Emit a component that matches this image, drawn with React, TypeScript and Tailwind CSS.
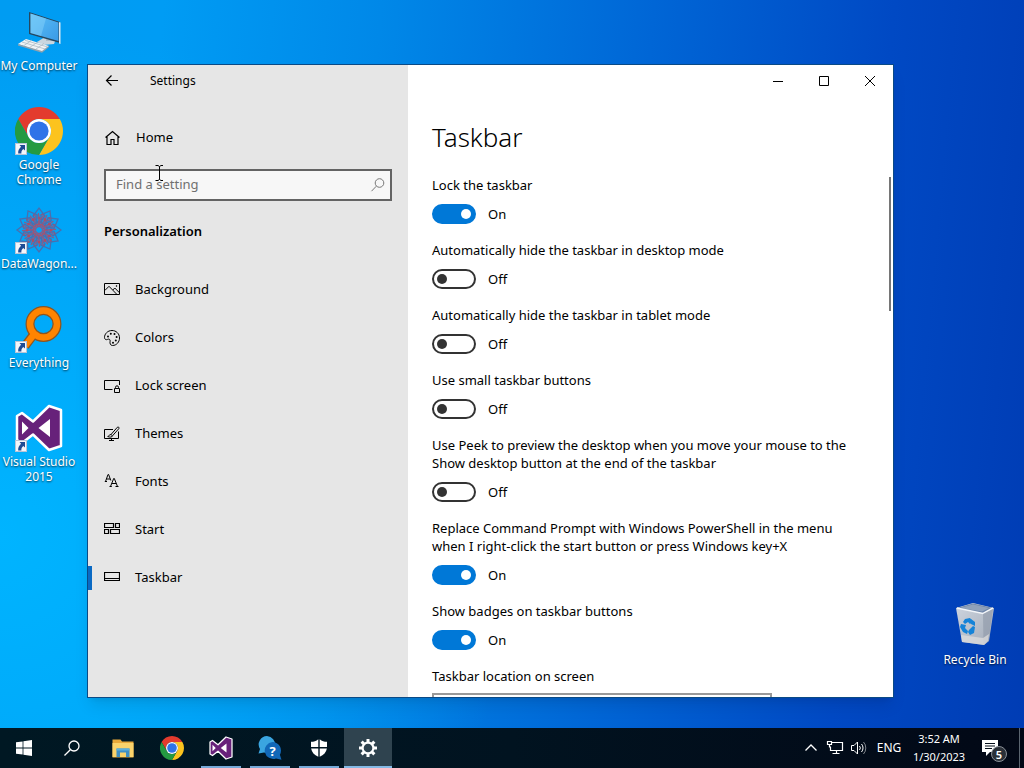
import { useState, type ReactNode } from "react";

function ShortcutArrow() {
  return (
    <svg viewBox="0 0 12 12" className="absolute bottom-0 left-0 size-3" aria-hidden="true">
      <rect x="0.5" y="0.5" width="11" height="11" fill="#f4f6fa" stroke="#b9c4d6" />
      <path d="M4.500 2h5.500v5.500L8.300 5.900C6.800 7 6.200 8.400 6.400 10.400H3.200C2.900 7.800 4 5.600 6.100 3.700Z" fill="#1f4c94" />
    </svg>
  );
}

function ComputerIcon() {
  return (
    <svg viewBox="0 0 48 48" className="size-12" aria-hidden="true">
      <defs>
        <linearGradient id="screen" x1="0" y1="0" x2="1" y2="1">
          <stop offset="0" stopColor="#5cc0f8" />
          <stop offset="1" stopColor="#3a9ae6" />
        </linearGradient>
      </defs>
      <path d="M22 34 30 29l11 2-2 5-11 1Z" fill="#c9d6df" />
      <path d="M31 27h7v6h-7Z" fill="#aebdc8" />
      <path d="M14 4 45 14v21L14 26Z" fill="#26475f" />
      <path d="M15.500 5.600 43.500 14.600v18.400l-28-8.100Z" fill="url(#screen)" />
      <path d="M15.500 5.600 31 10.600 26 28l-10.500-3.100Z" fill="#8bd4fb" opacity=".45" />
      <path d="m44 14 1.500.5V36l-1.500-.5Z" fill="#dbe9f2" />
      <path d="m3 36 8-5 23 7-7 6Z" fill="#f0f3f5" />
      <path d="m3 36 24 7 7-5.500v1.600L27 44.800 3 37.400Z" fill="#90a2ae" />
      <path d="m7 34 23 7M10 32.300l22 6.500M9 37.500l8-5.500M15 39.300l8-5.500M21 41l8-5.500" stroke="#a5b4be" strokeWidth=".7" />
    </svg>
  );
}

function ChromeIcon({ className }: { className: string }) {
  return (
    <svg viewBox="0 0 48 48" className={className} aria-hidden="true">
      <path d="M24 12H44.780A24 24 0 0 0 3.215 12L13.608 30A12 12 0 0 1 24 12Z" fill="#e33b2e" />
      <path d="M44.780 12A24 24 0 0 1 24 48L34.392 30A12 12 0 0 0 24 12Z" fill="#fcc31e" />
      <path d="M34.392 30 24 48A24 24 0 0 1 3.215 12L13.608 30A12 12 0 0 0 34.392 30Z" fill="#249a41" />
      <circle cx="24" cy="24" r="12" fill="#fff" />
      <circle cx="24" cy="24" r="9.600" fill="#2f73e8" />
    </svg>
  );
}

const petalAngles = [0, 30, 60, 90, 120, 150, 180, 210, 240, 270, 300, 330];

function DataWagonIcon() {
  return (
    <svg viewBox="0 0 48 48" className="size-12" fill="none" aria-hidden="true">
      {petalAngles.map((angle) => (
        <g key={angle} transform={`rotate(${angle} 24 24)`}>
          <path d="M24 18 18 10l6-8 6 8Z" stroke="#4a6fae" strokeWidth="1.300" />
          <path d="M24 21c-5-4-5-7-3-12M24 21c4-4 6-6 8-12" stroke="#8d5b84" strokeWidth="1.200" />
          <circle cx="24" cy="12" r="1.500" fill="#b04a63" />
          <circle cx="19" cy="9" r="1" fill="#8a5a80" />
        </g>
      ))}
      <circle cx="24" cy="24" r="6" stroke="#a05574" strokeWidth="1.500" />
    </svg>
  );
}

function EverythingIcon() {
  return (
    <svg viewBox="0 0 48 48" className="size-12" fill="none" aria-hidden="true">
      <path d="M19 29 10 41" stroke="#8b5522" strokeWidth="9" />
      <circle cx="28.500" cy="19" r="13.500" stroke="#8b5522" strokeWidth="9" />
      <path d="M20 28 10 41" stroke="#ff8400" strokeWidth="6.500" />
      <circle cx="28.500" cy="19" r="13.500" stroke="#ff8400" strokeWidth="6.500" />
    </svg>
  );
}

function VisualStudioIcon({ className }: { className: string }) {
  return (
    <svg viewBox="0 0 48 48" className={className} aria-hidden="true">
      <path
        d="M34 2 46 6v36l-12 4-16-15.500L7 39l-5-3V12l5-3 11 8.500Z"
        fill="#67217a"
        stroke="#fff"
        strokeWidth="2.500"
        strokeLinejoin="round"
      />
      <path d="M35 15v18L23.500 24ZM7 17.500v13l6.500-6.500Z" fill="#fff" />
    </svg>
  );
}

function RecycleBinIcon() {
  return (
    <svg viewBox="0 3 48 48" className="size-12" aria-hidden="true">
      <defs>
        <linearGradient id="bin" x1="0" y1="0" x2="1" y2="1">
          <stop offset="0" stopColor="#cfd6e0" />
          <stop offset="1" stopColor="#a3abb8" />
        </linearGradient>
      </defs>
      <path d="M5 9 22 4l21 5-5 33-5 4-22-3Z" fill="url(#bin)" />
      <path d="M6 9 22 4.500 42 9l-10 5.500Z" fill="#6f86a8" />
      <path d="m9 9 13-3.500L38 9l-7 3.500Z" fill="#8fa1ba" />
      <path d="M6 9 32 14.500 42 9" stroke="#f3f6fa" strokeWidth="1.500" fill="none" />
      <path d="m32 15 10-5-4.500 32-5 4Z" fill="#939dac" opacity=".7" />
      <path d="m10 36 22 3 6-4-1 7-4 4-22-3Z" fill="#dedede" opacity=".75" />
      <g fill="#1483d8">
        <path d="m14 20 5-1 3 4-3 2-2-2-3 2-2-2Z" />
        <path d="m10 25 5 1-1 3 3 3-1 3-4-2-3-5Z" />
        <path d="m18 31 4-4 2 1-1 6-4 2-2-3Z" />
        <path d="m20 20 4 3v4l-4-2Z" />
      </g>
    </svg>
  );
}

function DesktopIcon({ label, shortcut, children }: { label: string; shortcut?: boolean; children: ReactNode }) {
  return (
    <button
      type="button"
      className="flex h-[99px] w-[78px] flex-col items-center gap-0.5 pt-2 text-center text-xs leading-[15px] text-white [text-shadow:0_1px_2px_rgba(0,0,0,0.7)]"
    >
      <span className="relative shrink-0">
        {children}
        {shortcut && <ShortcutArrow />}
      </span>
      <span>{label}</span>
    </button>
  );
}

function LineIcon({ children }: { children: ReactNode }) {
  return (
    <svg viewBox="0 0 16 16" className="size-4 shrink-0" fill="none" stroke="currentColor" aria-hidden="true">
      {children}
    </svg>
  );
}

const navItems: { label: string; icon: ReactNode }[] = [
  {
    label: "Background",
    icon: (
      <LineIcon>
        <path d="M.5 1.500h15v11H.5ZM.8 8.500 5 4.300l7.500 7.700M8.800 8l2-2 4.700 4.800" />
        <circle cx="12.500" cy="4" r=".4" />
      </LineIcon>
    ),
  },
  {
    label: "Colors",
    icon: (
      <LineIcon>
        <path d="M8 .5C3.500.5.500 4 .5 7.500c0 2 1.800 2.600 3 1.900 1.500-.8 3 .1 2.600 1.800-.5 2.200.3 4.300 2.400 4.300 4 0 7-3.500 7-7.500 0-4.500-3.500-7.500-7.500-7.500Z" />
        <g fill="currentColor" stroke="none">
          <circle cx="4" cy="6.500" r="1" />
          <circle cx="6.800" cy="3.800" r="1" />
          <circle cx="10.500" cy="4" r="1" />
          <circle cx="12.600" cy="7" r="1" />
          <circle cx="11.800" cy="10.500" r="1" />
          <circle cx="9" cy="12.700" r="1" />
        </g>
      </LineIcon>
    ),
  },
  {
    label: "Lock screen",
    icon: (
      <LineIcon>
        <path d="M8.500 11.500h-8v-9h15v4.500" />
        <path d="M10.500 10.500h5v4h-5ZM11.500 10.500v-1.200a1.500 1.500 0 0 1 3 0v1.200" />
      </LineIcon>
    ),
  },
  {
    label: "Themes",
    icon: (
      <LineIcon>
        <path d="M9 3.500H.5v9h14V5.500M5 14.500h5M7.500 12.500v2" />
        <path d="M7 8.500 13.300 1.300a1 1 0 0 1 1.500 1.400L8.500 9.800M7 8.500c-1.500 0-2 1.500-3.300 2 2 1 4.600.7 4.800-.7Z" />
      </LineIcon>
    ),
  },
  {
    label: "Fonts",
    icon: (
      <LineIcon>
        <path d="M1.500 7.500 4 .5h.6l2.200 6M2.400 5h3.800M.8 7.500H3" />
        <path d="m6.500 12.500 3.200-8h.6l3.200 8M7.700 9.500h4.600M5.500 12.500h2.300M11.500 12.500h3" />
      </LineIcon>
    ),
  },
  {
    label: "Start",
    icon: (
      <LineIcon>
        <path d="M.5 1.500h9v4h-9ZM11.500 1.500h4v4h-4ZM.5 7.500h4v4h-4ZM6.500 7.500h9v4h-9Z" strokeWidth="1.200" />
      </LineIcon>
    ),
  },
  {
    label: "Taskbar",
    icon: (
      <LineIcon>
        <path d="M.5 2.500h15v8H.5ZM.5 8.500h15" strokeWidth="1.200" />
      </LineIcon>
    ),
  },
];

const initialSettings = [
  { label: "Lock the taskbar", on: true },
  { label: "Automatically hide the taskbar in desktop mode", on: false },
  { label: "Automatically hide the taskbar in tablet mode", on: false },
  { label: "Use small taskbar buttons", on: false },
  {
    label: "Use Peek to preview the desktop when you move your mouse to the Show desktop button at the end of the taskbar",
    on: false,
  },
  {
    label: "Replace Command Prompt with Windows PowerShell in the menu when I right-click the start button or press Windows key+X",
    on: true,
  },
  { label: "Show badges on taskbar buttons", on: true },
];

function Sidebar() {
  return (
    <aside className="flex w-80 shrink-0 flex-col bg-[#e6e6e6]">
      <header className="flex h-8 items-center">
        <button type="button" aria-label="Back" className="flex h-8 w-12 items-center justify-center">
          <svg viewBox="0 0 16 16" className="size-4" fill="none" stroke="currentColor" aria-hidden="true">
            <path d="M14 7.500H2.500M7.500 2.500l-5 5 5 5" strokeWidth="1.200" />
          </svg>
        </button>
        <h1 className="ml-3.5 text-xs">Settings</h1>
      </header>
      <a href="#home" className="mt-[17px] flex h-12 items-center gap-4 px-4">
        <LineIcon>
          <path d="m1.500 7.500 7-6 7 6M3 6.500v8h4V9.500h3v5h4v-8" strokeWidth="1.200" />
        </LineIcon>
        <span>Home</span>
      </a>
      <label className="mx-4 mt-[7px] flex h-8 items-center border-2 border-[#636363] bg-[#f7f7f7] px-2.5">
        <input
          type="text"
          aria-label="Find a setting"
          placeholder="Find a setting"
          className="min-w-0 flex-1 bg-transparent outline-none placeholder:text-[#707070]"
        />
        <svg viewBox="0 0 16 16" className="-mr-1.5 size-4" fill="none" stroke="#777" aria-hidden="true">
          <circle cx="9.500" cy="6" r="4.300" />
          <path d="m6.300 9.200-4.800 5" />
        </svg>
      </label>
      <h2 className="mt-5 px-4 leading-5 font-semibold">Personalization</h2>
      <nav className="mt-[25px] flex flex-col">
        {navItems.map((item) => (
          <a
            key={item.label}
            href={`#${item.label}`}
            aria-current={item.label === "Taskbar" ? "page" : undefined}
            className="group flex h-12 items-center"
          >
            <span className="h-6 w-1 group-aria-[current=page]:bg-[#0a6ac4]" />
            <span className="flex items-center gap-[15px] pl-3">
              {item.icon}
              <span>{item.label}</span>
            </span>
          </a>
        ))}
      </nav>
    </aside>
  );
}

function Content() {
  const [settings, setSettings] = useState(initialSettings);

  const toggle = (index: number) =>
    setSettings(settings.map((s, i) => (i === index ? { ...s, on: !s.on } : s)));

  return (
    <div className="flex min-w-0 flex-1 flex-col bg-white">
      <header className="flex h-8 shrink-0 justify-end">
        <button type="button" aria-label="Minimize" className="flex w-[46px] items-center justify-center">
          <svg viewBox="0 0 10 10" className="size-2.5" fill="none" stroke="currentColor" aria-hidden="true">
            <path d="M0 5.500h10" />
          </svg>
        </button>
        <button type="button" aria-label="Maximize" className="flex w-[46px] items-center justify-center">
          <svg viewBox="0 0 10 10" className="size-2.5" fill="none" stroke="currentColor" aria-hidden="true">
            <path d="M.5.5h9v9h-9Z" />
          </svg>
        </button>
        <button type="button" aria-label="Close" className="flex w-[46px] items-center justify-center">
          <svg viewBox="0 0 10 10" className="size-2.5" fill="none" stroke="currentColor" aria-hidden="true">
            <path d="m0 0 10 10M10 0 0 10" />
          </svg>
        </button>
      </header>
      <h2 className="mt-5 shrink-0 px-6 text-[26px] leading-10 font-light">Taskbar</h2>
      <div className="relative mt-[19px] flex min-h-0 flex-1 flex-col">
        <div className="flex min-h-0 flex-1 flex-col gap-[17px] overflow-y-auto pr-8 pl-6 leading-[18px] [scrollbar-width:none]">
          {settings.map((setting, index) => (
            <div key={setting.label} className="flex shrink-0 flex-col gap-2.5">
              <label htmlFor={`setting-${index}`}>{setting.label}</label>
              <div className="flex h-5 items-center gap-3">
                <input
                  id={`setting-${index}`}
                  type="checkbox"
                  role="switch"
                  checked={setting.on}
                  onChange={() => toggle(index)}
                  className="flex h-5 w-11 appearance-none items-center rounded-full border-2 border-[#333] px-[3px] before:size-2.5 before:rounded-full before:bg-[#333] checked:justify-end checked:border-[#0078d7] checked:bg-[#0078d7] checked:before:bg-white"
                />
                <span>{setting.on ? "On" : "Off"}</span>
              </div>
            </div>
          ))}
          <div className="flex shrink-0 flex-col gap-2">
            <label htmlFor="location">Taskbar location on screen</label>
            <select id="location" className="h-8 w-[340px] border-2 border-[#999] bg-white px-2">
              <option>Bottom</option>
              <option>Left</option>
              <option>Right</option>
              <option>Top</option>
            </select>
          </div>
        </div>
        <div className="absolute top-px right-0.5 h-[134px] w-0.5 bg-[#767676]" />
      </div>
    </div>
  );
}

const gearAngles = [0, 45, 90, 135, 180, 225, 270, 315];

const pinnedApps: { label: string; icon: ReactNode; state: "closed" | "running" | "active" }[] = [
  {
    label: "File Explorer",
    state: "closed",
    icon: (
      <svg viewBox="0 0 24 24" className="size-6" aria-hidden="true">
        <path d="M1.500 3.500h8l1.500 2h11.500v16h-21Z" fill="#e9a93a" />
        <path d="M1.500 7h21v14h-21Z" fill="#fbd36b" />
        <path d="M5.500 21v-8.500h13V21h-3.500v-4.500H9V21Z" fill="#3f8fc4" />
        <path d="M5.500 12.500h13v2h-13Z" fill="#5fb0dc" />
      </svg>
    ),
  },
  { label: "Google Chrome", state: "closed", icon: <ChromeIcon className="size-6" /> },
  { label: "Visual Studio 2015", state: "running", icon: <VisualStudioIcon className="size-6" /> },
  {
    label: "Help Viewer",
    state: "running",
    icon: (
      <svg viewBox="0 0 24 24" className="size-6" aria-hidden="true">
        <path d="M9 0a8.500 8.500 0 0 0-7 13L.5 17.500 6 16.600A8.500 8.500 0 1 0 9 0Z" fill="#3aa5e0" />
        <path d="M14.500 6a8.500 8.500 0 1 0 3.500 16.500l5.500 1.200-1.600-5A8.500 8.500 0 0 0 14.500 6Z" fill="#1268b8" />
        <text x="14.500" y="19.500" fill="#fff" fontSize="13" fontWeight="700" textAnchor="middle" fontFamily="Open Sans">
          ?
        </text>
      </svg>
    ),
  },
  {
    label: "Security",
    state: "running",
    icon: (
      <svg viewBox="0 0 20 20" className="size-5" fill="#fff" aria-hidden="true">
        <path d="M9.300 1.200V9H2V3.800c2.800 0 5.200-.8 7.300-2.600ZM10.700 1.200V9H18V3.800c-2.800 0-5.200-.8-7.300-2.600ZM9.300 10.400v8.400c-4-1.800-6.600-4.700-7.200-8.400ZM10.700 10.400v8.400c4-1.800 6.600-4.700 7.200-8.400Z" />
      </svg>
    ),
  },
  {
    label: "Settings",
    state: "active",
    icon: (
      <svg viewBox="0 0 20 20" className="size-5" fill="none" stroke="#fff" aria-hidden="true">
        <circle cx="10" cy="10" r="5.400" strokeWidth="2.200" />
        {gearAngles.map((angle) => (
          <path key={angle} d="M8.500 4.500V1h3v3.500Z" fill="#fff" stroke="none" transform={`rotate(${angle} 10 10)`} />
        ))}
      </svg>
    ),
  },
];

function Taskbar() {
  return (
    <footer className="flex h-10 shrink-0 justify-between bg-linear-to-r from-[#001823] via-[#011320] to-[#020816] text-xs text-white">
      <div className="flex">
        <button type="button" aria-label="Start" className="flex w-12 items-center justify-center">
          <svg viewBox="0 0 16 16" className="size-4" fill="#fff" aria-hidden="true">
            <path d="m0 2.300 6.600-.9v6.200H0ZM7.400 1.200 16 0v7.600H7.400ZM0 8.400h6.600v6.200L0 13.700ZM7.400 8.400H16V16l-8.600-1.200Z" />
          </svg>
        </button>
        <button type="button" aria-label="Search" className="flex w-12 items-center justify-center">
          <svg viewBox="0 0 16 16" className="size-4" fill="none" stroke="#fff" strokeWidth="1.300" aria-hidden="true">
            <circle cx="10" cy="6" r="5" />
            <path d="M6.300 9.700.5 15.500" />
          </svg>
        </button>
        <div className="ml-[3px] flex gap-px">
          {pinnedApps.map((app) => (
            <button
              key={app.label}
              type="button"
              aria-label={app.label}
              data-state={app.state}
              className="group relative flex w-12 items-center justify-center data-[state=active]:bg-[#2f434f]"
            >
              {app.icon}
              <span className="absolute inset-x-1 bottom-0 h-0.5 group-data-[state=active]:inset-x-0 group-data-[state=active]:bg-[#85b9e5] group-data-[state=running]:bg-[#76a9d8]" />
            </button>
          ))}
        </div>
      </div>
      <div className="flex items-center">
        <button type="button" aria-label="Show hidden icons" className="flex h-10 w-6 items-center justify-center">
          <svg viewBox="0 0 12 12" className="size-3" fill="none" stroke="#fff" strokeWidth="1.300" aria-hidden="true">
            <path d="m.5 8.500 5.500-5.500 5.500 5.500" />
          </svg>
        </button>
        <button type="button" aria-label="Network" className="flex h-10 w-6 items-center justify-center">
          <svg viewBox="0 0 18 16" className="h-4 w-[18px]" fill="none" stroke="#fff" aria-hidden="true">
            <path d="M6 2.500h10.500v8h-12V7M10.500 10.500v3M6.500 13.500h7M1.500 1.500h4v3h-4ZM3.500 4.500V7H5" strokeWidth="1.200" />
          </svg>
        </button>
        <button type="button" aria-label="Volume" className="flex h-10 w-6 items-center justify-center">
          <svg viewBox="0 0 16 16" className="size-4" fill="none" stroke="#fff" aria-hidden="true">
            <path d="M.5 5.500H3l3.500-3.500v12L3 10.500H.5ZM8.500 6a3 3 0 0 1 0 4M10.500 4a6 6 0 0 1 0 8" />
            <path d="M12.500 2a9 9 0 0 1 0 12" opacity=".5" />
          </svg>
        </button>
        <button type="button" className="w-9 text-center">
          ENG
        </button>
        <button type="button" className="w-16 text-center text-[11px] leading-[18px]">
          3:52 AM
          <br />
          1/30/2023
        </button>
        <button type="button" aria-label="Notifications" className="relative flex h-10 w-12 items-center pl-2.5">
          <svg viewBox="0 0 18 18" className="size-[18px]" aria-hidden="true">
            <path d="M1 1h16v12H9l-4 4v-4H1Z" fill="#fff" />
            <path d="M4 4.500h10M4 7h10M4 9.500h7" stroke="#06101c" />
          </svg>
          <span className="absolute top-[18px] right-3 flex size-4 items-center justify-center rounded-full border border-[#8a9098] bg-[#2a3038] text-[11px] leading-none font-semibold">
            5
          </span>
        </button>
        <button type="button" aria-label="Show desktop" className="h-10 w-[5px] border-l border-[#5b6570]" />
      </div>
    </footer>
  );
}

export default function App() {
  return (
    <div className="flex h-screen flex-col overflow-hidden bg-[radial-gradient(circle_at_0%_70%,#00b4ff_0%,rgba(0,180,255,0)_45%),linear-gradient(95deg,#009cf2_0%,#009cf4_15%,#0088e8_35%,#0066d6_60%,#0049c4_82%,#003cb4_100%)] font-['Noto_Sans','Open_Sans',sans-serif] text-[13px] text-black">
      <main className="relative flex min-h-0 flex-1">
        <div className="flex w-[78px] shrink-0 flex-col">
          <DesktopIcon label="My Computer">
            <ComputerIcon />
          </DesktopIcon>
          <DesktopIcon label="Google Chrome" shortcut>
            <ChromeIcon className="size-12" />
          </DesktopIcon>
          <DesktopIcon label="DataWagon..." shortcut>
            <DataWagonIcon />
          </DesktopIcon>
          <DesktopIcon label="Everything" shortcut>
            <EverythingIcon />
          </DesktopIcon>
          <DesktopIcon label="Visual Studio 2015" shortcut>
            <VisualStudioIcon className="size-12" />
          </DesktopIcon>
        </div>
        <section
          aria-label="Settings"
          className="mt-16 mb-[30px] ml-[9px] flex min-w-0 flex-1 overflow-hidden border border-[#0a4a86] shadow-lg"
        >
          <Sidebar />
          <Content />
        </section>
        <div className="flex w-[130px] shrink-0 flex-col items-end justify-end pr-2.5 pb-[35px]">
          <DesktopIcon label="Recycle Bin">
            <RecycleBinIcon />
          </DesktopIcon>
        </div>
        <svg
          viewBox="0 0 8 16"
          className="pointer-events-none absolute top-[165px] left-[155px] h-4 w-2"
          fill="none"
          stroke="#000"
          aria-hidden="true"
        >
          <path d="M.5.5H3l1.500 1L6 .5h2M4.500 1.500v13M.5 15.500H3l1.500-1 1.500 1h2" />
        </svg>
      </main>
      <Taskbar />
    </div>
  );
}
